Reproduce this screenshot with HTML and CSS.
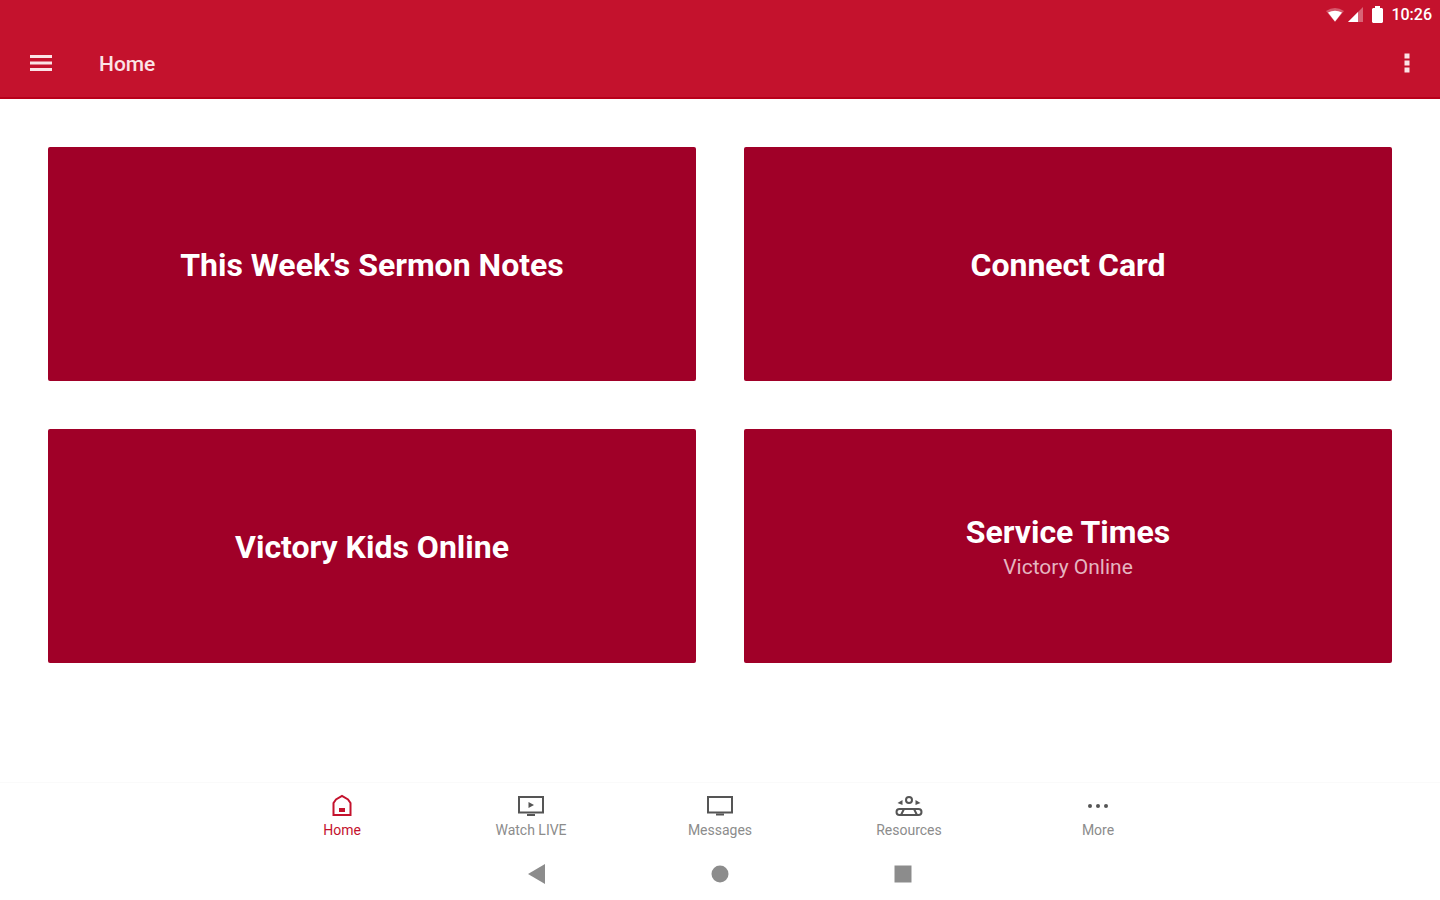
FILE: index.html
```
<!DOCTYPE html>
<html lang="en">
<head>
  <meta charset="UTF-8">
  <meta name="viewport" content="width=device-width, initial-scale=1">
  <title>Home</title>
  <link rel="stylesheet" href="styles.css">
</head>
<body>
  <header class="app-header">
    <div class="status-bar">
      <svg class="wifi-icon" width="18" height="14" viewBox="0 0 18 14" aria-hidden="true">
        <path d="M0 3Q9 -3 18 3L9 14Z" fill="#fff" opacity=".3"/>
        <path d="M2 4.500Q9 1 16 4.500L9 13.500Z" fill="#fff"/>
      </svg>
      <svg class="signal-icon" width="15" height="15" viewBox="0 0 15 15" aria-hidden="true">
        <path d="M15 0V15H0Z" fill="#fff" opacity=".35"/>
        <path d="M10 5V15H0Z" fill="#fff"/>
      </svg>
      <svg class="battery-icon" width="11" height="17" viewBox="0 0 11 17" aria-hidden="true">
        <path d="M3 0H8V2H10L11 3V16L10 17H1L0 16V3L1 2H3Z" fill="#fff"/>
      </svg>
      <span class="clock">10:26</span>
    </div>
    <div class="toolbar">
      <button class="icon-button" type="button" aria-label="Open menu">
        <svg width="22" height="18" viewBox="0 0 22 18">
          <path d="M0 2.500H22M0 9H22M0 15.500H22" stroke="#fbe3e6" stroke-width="3"/>
        </svg>
      </button>
      <h1 class="toolbar-title">Home</h1>
      <button class="icon-button" type="button" aria-label="More options">
        <svg width="6" height="20" viewBox="0 0 6 20">
          <path d="M.5 .5h5v5h-5zM.5 7.500h5v5h-5zM.5 14.500h5v5h-5z" fill="#fbe3e6"/>
        </svg>
      </button>
    </div>
  </header>

  <main class="cards">
    <a class="card" href="#notes"><span class="card-title">This Week's Sermon Notes</span></a>
    <a class="card" href="#connect"><span class="card-title">Connect Card</span></a>
    <a class="card" href="#kids"><span class="card-title">Victory Kids Online</span></a>
    <a class="card" href="#times">
      <span class="card-title">Service Times</span>
      <span class="card-subtitle">Victory Online</span>
    </a>
  </main>

  <nav class="tabs">
    <a class="tab active" href="#home" aria-current="page">
      <svg width="28" height="24" viewBox="0 0 28 24" fill="none" stroke="currentColor" stroke-width="2">
        <path d="M5.500 22V10L8 6.500L14 3L20 6.500L22.500 10V22Z"/>
        <path d="M11 15H17V19H11Z" fill="currentColor" stroke="none"/>
      </svg>
      <span>Home</span>
    </a>
    <a class="tab" href="#live">
      <svg width="28" height="24" viewBox="0 0 28 24" fill="none" stroke="currentColor" stroke-width="2">
        <path d="M2 4H26V19.500H2Z"/>
        <path d="M10 22H18"/>
        <path d="M11.500 9L17 12L11.500 15Z" fill="currentColor" stroke="none"/>
      </svg>
      <span>Watch LIVE</span>
    </a>
    <a class="tab" href="#messages">
      <svg width="28" height="24" viewBox="0 0 28 24" fill="none" stroke="currentColor" stroke-width="2">
        <path d="M2 4H26V19.500H2Z"/>
        <path d="M10 21.500H18"/>
      </svg>
      <span>Messages</span>
    </a>
    <a class="tab" href="#resources">
      <svg width="28" height="24" viewBox="0 0 28 24" fill="none" stroke="currentColor" stroke-width="2">
        <circle cx="14" cy="7" r="3"/>
        <path d="M7.500 7V12L2.500 10ZM20.500 7V12L25.500 10Z" fill="currentColor" stroke="none"/>
        <rect x="1.500" y="16" width="25" height="6" rx="3"/>
        <path d="M6 22L9 16M22 22L19 16"/>
      </svg>
      <span>Resources</span>
    </a>
    <a class="tab" href="#more">
      <svg width="28" height="24" viewBox="0 0 28 24" fill="currentColor">
        <circle cx="6" cy="13" r="2"/>
        <circle cx="14" cy="13" r="2"/>
        <circle cx="22" cy="13" r="2"/>
      </svg>
      <span>More</span>
    </a>
  </nav>

  <div class="system-nav">
    <button class="icon-button" type="button" aria-label="Back">
      <svg width="18" height="20" viewBox="0 0 18 20"><path d="M0 10L17 0V20Z" fill="#8c8c8c"/></svg>
    </button>
    <button class="icon-button" type="button" aria-label="Home screen">
      <svg width="18" height="18" viewBox="0 0 18 18"><circle cx="9" cy="9" r="8.500" fill="#8c8c8c"/></svg>
    </button>
    <button class="icon-button" type="button" aria-label="Recent apps">
      <svg width="18" height="18" viewBox="0 0 18 18"><path d="M.5 .5H17.500V17.500H.5Z" fill="#8c8c8c"/></svg>
    </button>
  </div>
</body>
</html>
```
FILE: styles.css
```
* {
  box-sizing: border-box;
}
body {
  margin: 0;
  min-height: 100vh;
  display: flex;
  flex-direction: column;
  font-family: Roboto, "Liberation Sans", sans-serif;
  background: #fff;
}
svg {
  display: block;
}
a {
  color: inherit;
  text-decoration: none;
}
.icon-button {
  padding: 0;
  border: none;
  background: none;
  cursor: pointer;
}

/* header */
.app-header {
  background: #c4122d;
  color: #fff;
  border-bottom: 2px solid #b8001a;
}
.status-bar {
  display: flex;
  justify-content: flex-end;
  align-items: center;
  height: 29px;
  padding-right: 8px;
}
.signal-icon {
  margin-left: 4px;
}
.battery-icon {
  margin-left: 9px;
}
.clock {
  margin-left: 8px;
  font-size: 16px;
  font-weight: 500;
}
.toolbar {
  display: flex;
  align-items: center;
  height: 68px;
  padding: 0 30px;
}
.toolbar-title {
  flex: 1;
  margin: 0 0 0 47px;
  padding-top: 2px;
  font-size: 21px;
  font-weight: 500;
  line-height: 24px;
  color: #fbe3e6;
}

/* home cards */
.cards {
  flex: 1;
  display: grid;
  grid-template-columns: 1fr 1fr;
  grid-auto-rows: 234px;
  gap: 48px;
  padding: 48px;
}
.card {
  display: flex;
  flex-direction: column;
  align-items: center;
  justify-content: center;
  padding-top: 2px;
  border-radius: 2px;
  background: #a00028;
  color: #fff;
}
.card-title {
  font-size: 32px;
  font-weight: 700;
  line-height: 40px;
}
.card-subtitle {
  font-size: 21px;
  line-height: 30px;
  color: #e5b5c0;
}

/* bottom navigation */
.tabs {
  display: flex;
  justify-content: center;
  height: 65px;
  padding-top: 10px;
  border-top: 1px solid #fafafa;
}
.tab {
  flex: 0 1 189px;
  display: flex;
  flex-direction: column;
  align-items: center;
  font-size: 14px;
  line-height: 26px;
  color: #8c8c8c;
}
.tab svg {
  color: #555;
}
.active,
.active svg {
  color: #c4122d;
}
.system-nav {
  display: flex;
  justify-content: center;
  align-items: center;
  gap: 165px;
  height: 53px;
}
```
